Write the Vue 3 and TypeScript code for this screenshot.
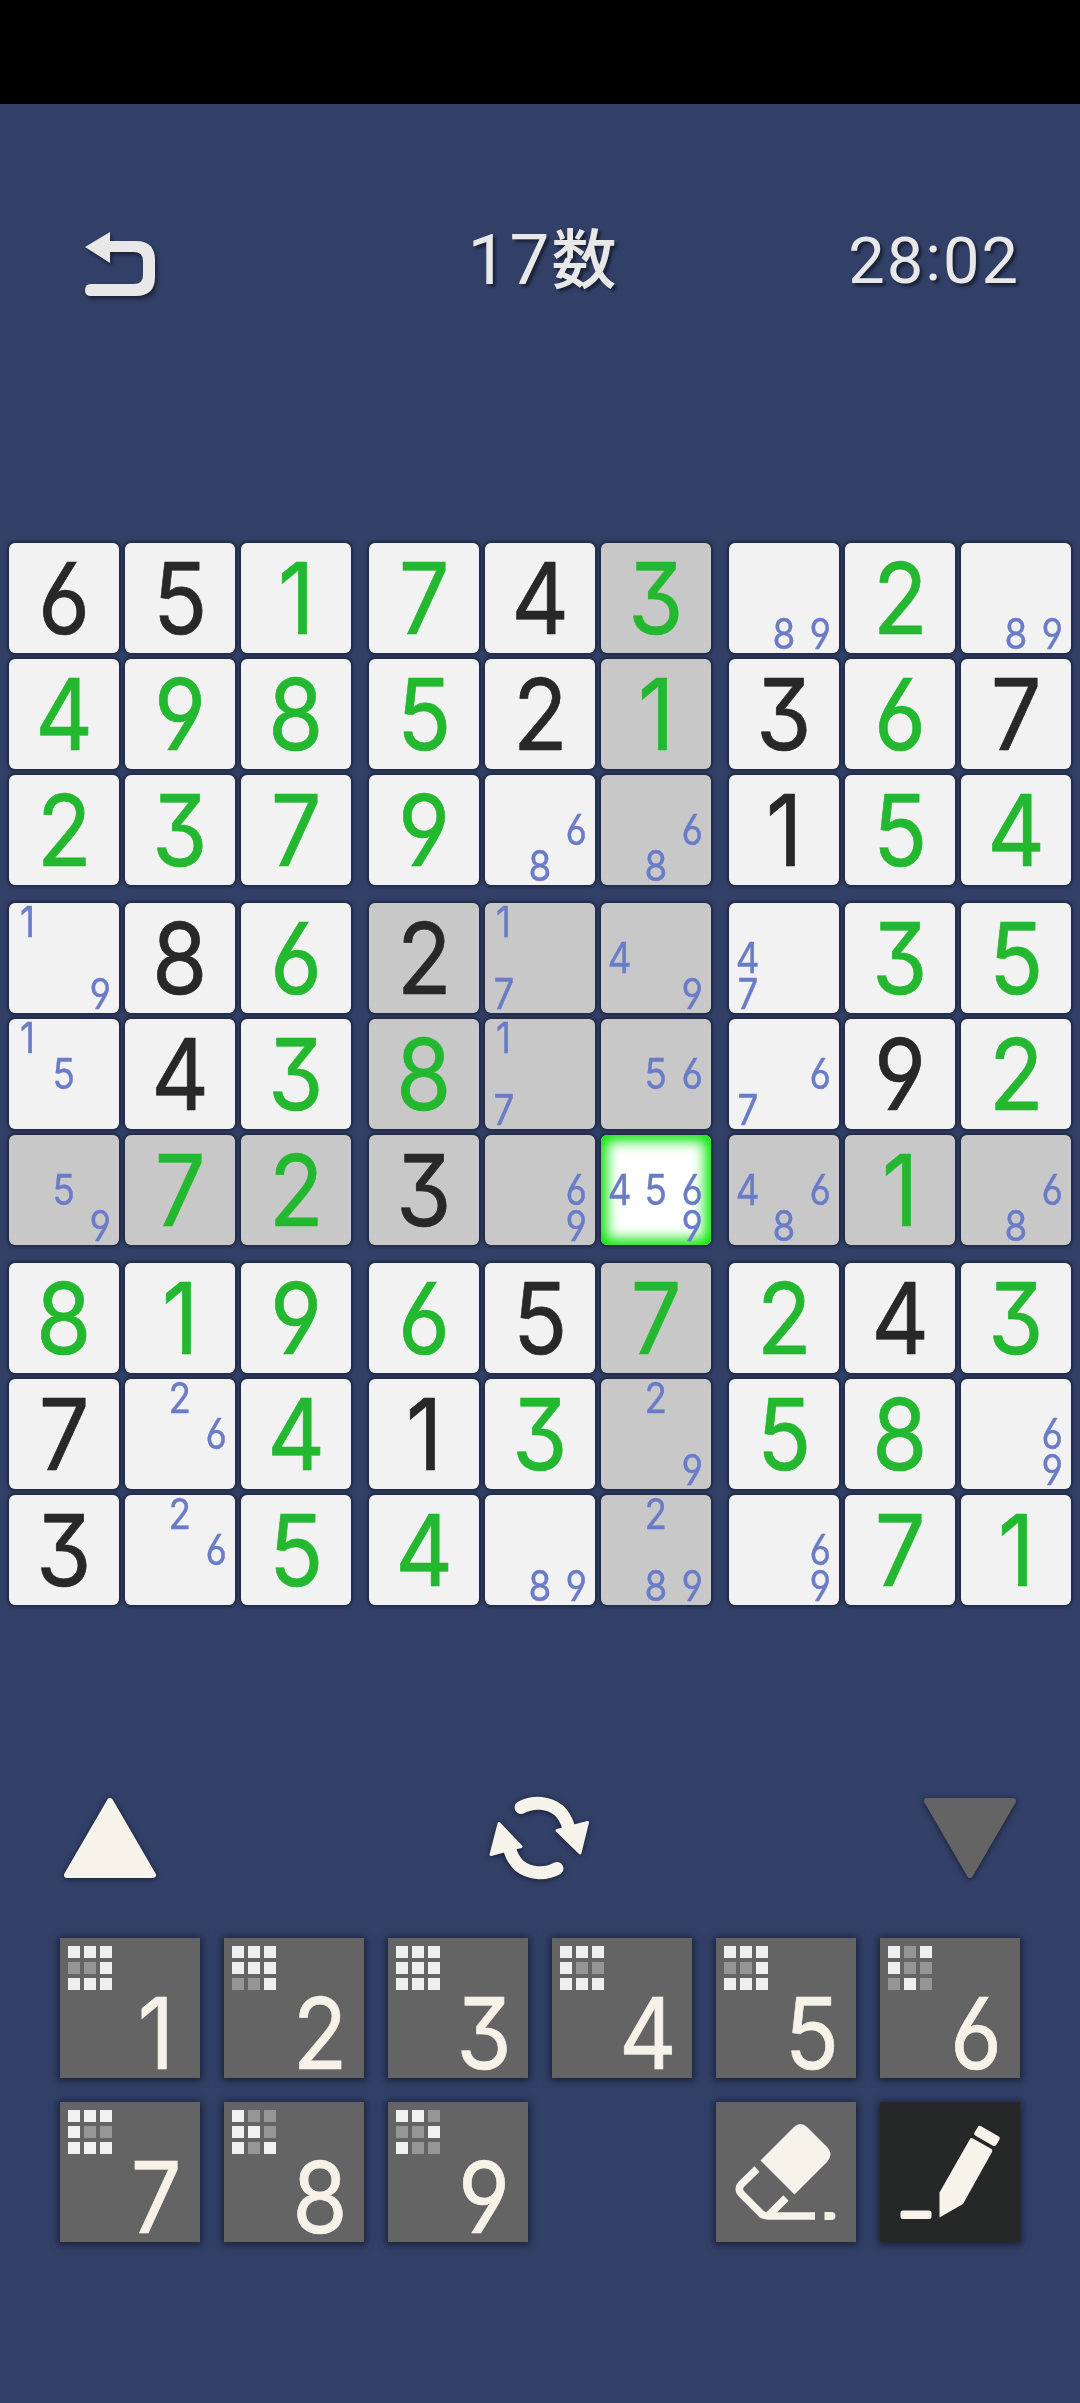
<script setup lang="ts">
interface Cell {
  row: number
  col: number
  kind: 'given' | 'solved' | 'notes'
  value: string
}

interface Key {
  digit: number
  boxes: boolean[]
}

const SELECTED = { row: 5, col: 5 }

// "x" prefix: clue given by the puzzle, "n" prefix: pencil marks, no prefix: entered by the player
const rows: string[] = [
  'x6 x5 1 7 x4 3 n89 2 n89',
  '4 9 8 5 x2 1 x3 6 x7',
  '2 3 7 9 n68 n68 x1 5 4',
  'n19 x8 6 x2 n17 n49 n47 3 5',
  'n15 x4 3 8 n17 n56 n67 x9 2',
  'n59 7 2 x3 n69 n4569 n468 1 n68',
  '8 1 9 6 x5 7 2 x4 3',
  'x7 n26 4 x1 3 n29 5 8 n69',
  'x3 n26 5 4 n89 n289 n69 7 1',
]

const grid: Cell[][] = rows.map((line, row) =>
  line.split(' ').map((token, col) => {
    const kind = token[0] === 'x' ? 'given' : token[0] === 'n' ? 'notes' : 'solved'
    return { row, col, kind, value: kind === 'solved' ? token : token.slice(1) }
  }),
)

const boxes: Cell[][] = Array.from({ length: 9 }, (_, b) =>
  Array.from({ length: 9 }, (_, i) => grid[Math.floor(b / 3) * 3 + Math.floor(i / 3)][(b % 3) * 3 + (i % 3)]),
)

function cellState(c: Cell): string {
  if (c.row === SELECTED.row && c.col === SELECTED.col) return 'selected'
  const sameBox =
    Math.floor(c.row / 3) === Math.floor(SELECTED.row / 3) && Math.floor(c.col / 3) === Math.floor(SELECTED.col / 3)
  return c.row === SELECTED.row || c.col === SELECTED.col || sameBox ? 'related' : ''
}

const keys: Key[] = Array.from({ length: 9 }, (_, i) => ({
  digit: i + 1,
  boxes: boxes.map((box) => box.some((c) => c.kind !== 'notes' && c.value === String(i + 1))),
}))
</script>

<template>
  <div class="screen">
    <div class="status"></div>
    <header class="top">
      <svg class="back" width="80" height="76" viewBox="0 0 80 76">
        <path d="M5 21 L30 6 V15 H56 Q75 15 75 34 V51 Q75 70 56 70 H11 Q5 70 5 64 Q5 58 11 58 H54 Q63 58 63 49 V35 Q63 26 54 26 H30 V37 Z" />
      </svg>
      <h1 class="title"><span class="num">17</span><span class="kanji">数</span></h1>
      <div class="time">28<span class="colon">:</span>02</div>
    </header>

    <main class="board">
      <div v-for="(box, b) in boxes" :key="b" class="box">
        <div v-for="c in box" :key="c.row * 9 + c.col" class="cell" :class="[cellState(c), c.kind]">
          <div v-if="c.kind === 'notes'" class="marks">
            <span v-for="n in 9" :key="n" class="mark"><b v-if="c.value.includes(String(n))">{{ n }}</b></span>
          </div>
          <span v-else class="digit">{{ c.value }}</span>
        </div>
      </div>
    </main>

    <nav class="tools">
      <svg width="110" height="100" viewBox="0 0 110 100">
        <path class="cream" stroke-width="6" d="M55 13 L98 87 H12 Z" />
      </svg>
      <svg width="110" height="100" viewBox="0 8.500 110 100">
        <path class="arc" d="M36 28 C49 21 64 23 74 31 Q80 37 83 46" />
        <path class="cream" stroke-width="3" d="M72 51 L102.500 43 L95 73.500 Z" />
        <path class="arc" d="M72 89 C59 96 44 94 34 86 Q28 80 25 71" />
        <path class="cream" stroke-width="3" d="M36 67 L6 75 L14 44 Z" />
      </svg>
      <svg width="110" height="100" viewBox="0 0 110 100">
        <path class="grey" stroke-width="6" d="M55 87 L98 13 H12 Z" />
      </svg>
    </nav>

    <section class="pad">
      <button v-for="k in keys" :key="k.digit" class="key">
        <span class="mini"><i v-for="(on, i) in k.boxes" :key="i" :class="{ on }"></i></span>
        <span class="digit">{{ k.digit }}</span>
      </button>
      <button class="key eraser">
        <svg width="140" height="140" viewBox="0 0 140 140">
          <path d="M44.500 58.500 L78 25 Q84.500 19 91 25 L111 45 Q118 52 111 60 L78.500 92.500 Z" />
          <path class="line" d="M41 67 L25.500 82 Q21 87 25.500 92 L46 112.500 Q49 114 52 114 H99" />
          <path class="line" d="M70 96 L53 113" />
          <path d="M108.500 110 H115 Q119.500 110 119.500 114 Q119.500 118 115 118 H108.500 Z" />
        </svg>
      </button>
      <button class="key pencil">
        <svg width="140" height="140" viewBox="0 0 140 140">
          <rect x="20.500" y="108.500" width="31" height="8.500" rx="2.500" />
          <path d="M90 37 Q91 35.500 93 36.500 L111.500 47 Q113 48 112 50 L83 102 L59.500 115.500 V90.500 Z" />
          <rect x="-12.500" y="-5.500" width="25" height="11" rx="2.500" transform="translate(107 34) rotate(30)" />
        </svg>
      </button>
    </section>
  </div>
</template>

<style>
body {
  margin: 0;
  background: #324068;
}
</style>

<style scoped>
.screen {
  width: 1080px;
  height: 2403px;
  background: #324068;
  overflow: hidden;
  font-family: Inter, 'Noto Sans', sans-serif;
}
.status {
  height: 104px;
  background: #000;
}
.top {
  box-sizing: border-box;
  height: 439px;
  padding: 122px 60px 0 80px;
  display: grid;
  grid-template-columns: 280px 1fr 280px;
  align-items: start;
  color: #e8e8e8;
}
.back {
  fill: #e8e8e8;
  filter: drop-shadow(2px 3px 2px #1b2238);
}
.title,
.time {
  margin: 0;
  height: 68px;
  display: flex;
  align-items: center;
  text-shadow: 3px 3px 3px #1b2238;
  white-space: nowrap;
}
.title {
  justify-content: center;
  font-weight: 400;
  margin-left: -16px;
}
.num {
  font: 400 71px/68px Roboto, sans-serif;
  letter-spacing: 2px;
}
.kanji {
  font: 500 65px/68px 'Noto Sans CJK JP', sans-serif;
  margin-bottom: 11px;
}
.time {
  justify-content: flex-end;
  height: 69px;
  font: 400 65px/68px Roboto, sans-serif;
  letter-spacing: 2px;
}
.colon {
  padding-bottom: 5px;
}
.board {
  display: grid;
  grid-template-columns: repeat(3, 342px);
  gap: 18px;
  padding: 0 9px;
}
.box {
  display: grid;
  grid-template-columns: repeat(3, 110px);
  grid-auto-rows: 110px;
  gap: 6px;
}
.cell {
  display: flex;
  align-items: center;
  justify-content: center;
  border-radius: 6px;
  background: #f2f2f2;
  box-shadow: 0 0 3px 2px #202944;
}
.related {
  background: #c8c8c8;
}
.selected {
  background: #fff;
  box-shadow: inset 0 0 13px 6px #08e408, 0 0 3px 2px #202944;
}
.digit {
  display: block;
  font-size: 99.5px;
  line-height: 110px;
  font-weight: 400;
  font-feature-settings: 'cv09' 1, 'cv03' 1, 'cv04' 1;
  -webkit-text-stroke: 0.7px currentColor;
  transform: scaleX(0.9);
}
.given {
  color: #282828;
}
.solved {
  color: #23b82f;
}
.marks {
  display: grid;
  grid-template-columns: repeat(3, 36px);
  grid-auto-rows: 36px;
}
.mark {
  display: flex;
  align-items: center;
  justify-content: center;
}
.mark b {
  font-size: 42px;
  line-height: 36px;
  font-weight: 400;
  color: #6a7cc8;
  font-feature-settings: 'cv09' 1, 'cv03' 1, 'cv04' 1;
  -webkit-text-stroke: 0.4px currentColor;
  transform: scaleX(0.88);
}
.tools {
  display: flex;
  justify-content: space-between;
  padding: 183px 55px 0;
  height: 150px;
}
.tools svg {
  filter: drop-shadow(0 1px 3px #161c30);
}
.cream {
  fill: #f6f3ea;
  stroke: #f6f3ea;
  stroke-linejoin: round;
}
.grey {
  fill: #646464;
  stroke: #646464;
  stroke-linejoin: round;
}
.arc {
  fill: none;
  stroke: #f6f3ea;
  stroke-width: 13;
  stroke-linecap: round;
}
.pad {
  display: grid;
  grid-template-columns: repeat(6, 140px);
  grid-auto-rows: 140px;
  gap: 24px;
  padding: 0 60px;
}
.key {
  box-sizing: border-box;
  border: 0;
  padding: 0;
  font-family: inherit;
  color: #f6f2e8;
  background: #646464;
  box-shadow: 0 1px 7px 2px #1b2238;
  display: grid;
  grid-template-columns: 52px 88px;
  grid-template-rows: 41px 99px;
}
.mini {
  padding: 8px 0 0 8px;
  display: grid;
  grid-template-columns: repeat(3, 12px);
  grid-auto-rows: 12px;
  gap: 4px;
}
.mini i {
  background: #969696;
}
.mini .on {
  background: #f0f0f0;
}
.key .digit {
  grid-column: 2;
  grid-row: 2;
  text-align: center;
  line-height: 108px;
}
.eraser {
  grid-column: 5;
}
.eraser,
.pencil {
  display: block;
}
.key svg {
  display: block;
  fill: #f6f3ea;
}
.key .line {
  fill: none;
  stroke: #f6f3ea;
  stroke-width: 7.500;
}
.pencil {
  background: #262727;
}
</style>
